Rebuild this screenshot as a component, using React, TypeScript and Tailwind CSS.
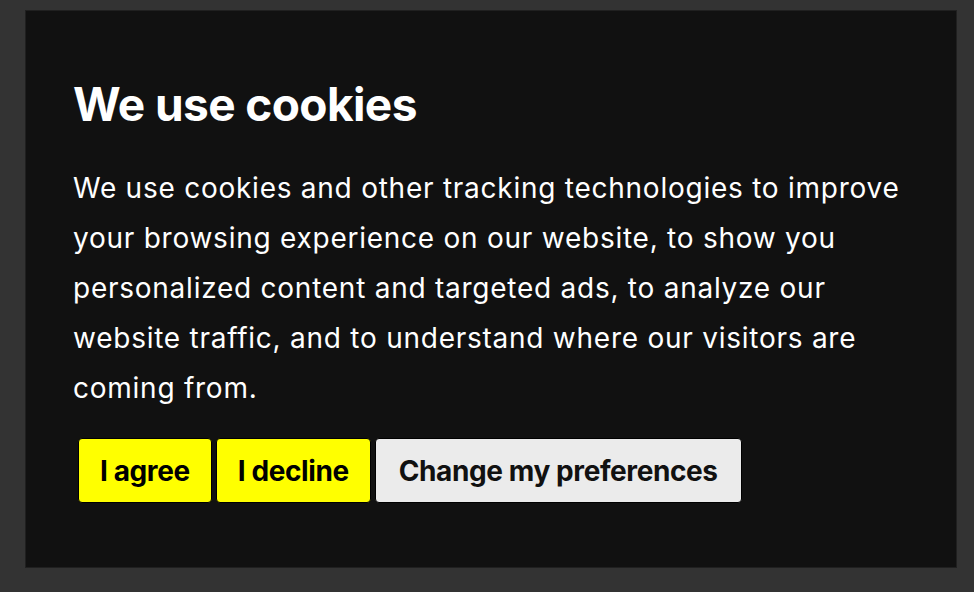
import React from "react";

export default function App() {
  return (
    <div className="w-[974px] h-[592px] bg-[#333333] pt-[10px] pl-[25px] pr-[17px] pb-[24px]" style={{ fontFamily: "Inter, 'Noto Sans', sans-serif" }}>
      <div className="h-full bg-[#111111] border border-[#202020] pl-[47px] pt-[64px]">
        <h1 className="text-[46px] leading-[58px] font-bold text-white tracking-[-0.6px]">We use cookies</h1>
        <p className="mt-[30px] text-[28px] leading-[50px] text-white w-[860px] tracking-[0.75px]">
          We use cookies and other tracking technologies to improve your browsing experience on our website, to show you personalized content and targeted ads, to analyze our website traffic, and to understand where our visitors are coming from.
        </p>
        <div className="mt-[25px] ml-[5px] flex gap-[4px]">
          <button className="h-[65px] px-[21px] bg-[#ffff00] text-black text-[28px] tracking-[-0.4px] font-bold rounded-[4px] border border-black">I agree</button>
          <button className="h-[65px] px-[21px] bg-[#ffff00] text-black text-[28px] tracking-[-0.4px] font-bold rounded-[4px] border border-black">I decline</button>
          <button className="h-[65px] px-[23px] bg-[#ebebeb] text-[#111] text-[28px] tracking-[-0.4px] font-bold rounded-[4px] border border-black">Change my preferences</button>
        </div>
      </div>
    </div>
  );
}
